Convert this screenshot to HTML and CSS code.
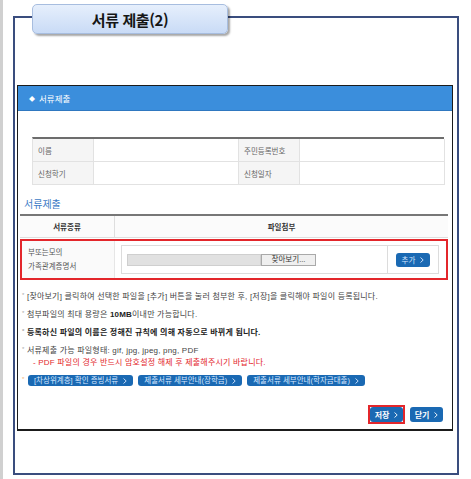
FILE: index.html
```html
<!DOCTYPE html>
<html lang="ko">
<head>
<meta charset="utf-8">
<title>서류 제출(2)</title>
<link rel="stylesheet" href="styles.css">
</head>
<body>
<div class="page">
  <div class="frame">
    <div class="tab">서류 제출(2)</div>
    <div class="dialog">
      <div class="dlg-head"><span class="diamond">◆</span>서류제출</div>
      <div class="info">
        <div class="th">이름</div><div class="td"></div><div class="th">주민등록번호</div><div class="td"></div>
        <div class="th">신청학기</div><div class="td"></div><div class="th">신청일자</div><div class="td"></div>
      </div>
      <div class="subtitle">서류제출</div>
      <div class="docs">
        <div class="docs-head">
          <div class="dh dh1">서류종류</div>
          <div class="dh">파일첨부</div>
        </div>
        <div class="docs-row">
          <div class="doc-name">부또는모의<br>가족관계증명서</div>
          <div class="doc-file">
            <div class="file-box">
              <div class="file-input">
                <div class="file-path"></div>
                <div class="file-btn">찾아보기...</div>
              </div>
              <div class="file-add">
                <span class="btn btn-add">추가<svg class="chev" viewBox="0 0 4 6"><polyline points="0.5,0.5 3.2,3 0.5,5.5"/></svg></span>
              </div>
            </div>
          </div>
        </div>
      </div>
      <ul class="notes">
        <li>[찾아보기] 클릭하여 선택한 파일을 [추가] 버튼을 눌러 첨부한 후, [저장]을 클릭해야 파일이 등록됩니다.</li>
        <li>첨부파일의 최대 용량은 <b>10MB</b>이내만 가능합니다.</li>
        <li class="strong">등록하신 파일의 이름은 정해진 규칙에 의해 자동으로 바뀌게 됩니다.</li>
        <li>서류제출 가능 파일형태: gif, jpg, jpeg, png, PDF<br><span class="warn">- PDF 파일의 경우 반드시 암호설정 해제 후 제출해주시기 바랍니다.</span></li>
        <li class="links">
          <span class="btn btn-link">[차상위계층] 확인 증빙서류<svg class="chev" viewBox="0 0 4 6"><polyline points="0.5,0.5 3.2,3 0.5,5.5"/></svg></span>
          <span class="btn btn-link">제출서류 세부안내(장학금)<svg class="chev" viewBox="0 0 4 6"><polyline points="0.5,0.5 3.2,3 0.5,5.5"/></svg></span>
          <span class="btn btn-link">제출서류 세부안내(학자금대출)<svg class="chev" viewBox="0 0 4 6"><polyline points="0.5,0.5 3.2,3 0.5,5.5"/></svg></span>
        </li>
      </ul>
      <div class="actions">
        <span class="save-mark"><span class="btn btn-act">저장<svg class="chev" viewBox="0 0 4 6"><polyline points="0.5,0.5 3.2,3 0.5,5.5"/></svg></span></span>
        <span class="btn btn-act">닫기<svg class="chev" viewBox="0 0 4 6"><polyline points="0.5,0.5 3.2,3 0.5,5.5"/></svg></span>
      </div>
    </div>
  </div>
</div>
</body>
</html>
```

FILE: styles.css
```css
* { box-sizing: border-box; }
html, body { margin: 0; padding: 0; background: #fff; }
body {
  font-family: "Liberation Sans", "Noto Sans CJK KR", sans-serif;
  color: #444;
}
.page {
  width: 471px;
  height: 479px;
  border-left: 3px solid #d0d0d0;
  padding-top: 16px;
  padding-left: 10px;
}
.frame {
  position: relative;
  width: 446px;
  height: 459px;
  border: 2px solid #3a4d7e;
  padding: 0 0 0 2px;
}
.tab {
  position: absolute;
  left: 17px;
  top: -14px;
  width: 196px;
  height: 30px;
  border: 1px solid #a7bddf;
  border-radius: 5px;
  background: linear-gradient(#e6effc, #c9dbf6);
  box-shadow: 2px 2px 2px rgba(0,0,0,0.35);
  display: flex;
  align-items: center;
  justify-content: center;
  font-family: "Noto Sans CJK KR", sans-serif;
  font-weight: 700;
  font-size: 15px;
  color: #151515;
  letter-spacing: -0.4px;
}
.dialog {
  margin-top: 67px;
  width: 436px;
  height: 346px;
  border: 1px solid #1b1b1b;
  border-bottom-width: 2px;
  display: flex;
  flex-direction: column;
}
.dlg-head {
  height: 25px;
  background: #3b8edc;
  border-bottom: 1px solid #2f78c0;
  color: #fff;
  font-size: 8.5px;
  display: flex;
  align-items: center;
  padding-left: 11px;
}
.diamond { font-size: 6px; margin-right: 4px; }
.info {
  margin: 26px 0 0 14px;
  width: 412px;
  display: grid;
  grid-template-columns: 61px 145px 61px 145px;
  border-top: 2px solid #6d6d6d;
  border-left: 1px solid #e2e2e2;
}
.info .th, .info .td {
  height: 23px;
  border-right: 1px solid #e2e2e2;
  border-bottom: 1px solid #e2e2e2;
  display: flex;
  align-items: center;
  font-size: 7.5px;
  color: #666;
}
.info .th { background: #f5f5f5; padding-left: 5px; }
.subtitle {
  margin: 13px 0 0 6px;
  font-size: 10px;
  line-height: 14px;
  color: #3c7bc6;
}
.docs {
  margin: 2px 0 0 2px;
  width: 428px;
  border-top: 2px solid #777;
}
.docs-head {
  display: grid;
  grid-template-columns: 95px 333px;
  height: 22px;
  border-bottom: 1px solid #dedede;
  background: #fbfbfb;
}
.dh {
  display: flex;
  align-items: center;
  justify-content: center;
  font-size: 7.5px;
  font-weight: 700;
  color: #333;
}
.dh1 { border-right: 1px solid #dedede; }
.docs-row {
  display: grid;
  grid-template-columns: 93px 331px;
  height: 41px;
  border: 2px solid #e3262b;
  margin-top: 1px;
}
.doc-name {
  background: #fafafa;
  border-right: 1px solid #e6e6e6;
  font-size: 7.5px;
  line-height: 14px;
  color: #555;
  display: flex;
  align-items: center;
  padding-left: 6px;
}
.doc-file { padding: 4px 7px 4px 6px; }
.file-box {
  height: 100%;
  border: 1px solid #dcdcdc;
  display: flex;
}
.file-input {
  width: 266px;
  display: flex;
  align-items: center;
  padding-left: 5px;
  border-right: 1px solid #dcdcdc;
}
.file-path {
  width: 134px;
  height: 12px;
  background: #e1e1e1;
  border: 1px solid #cfcfcf;
}
.file-btn {
  width: 55px;
  height: 12px;
  background: #efefef;
  border: 1px solid #a9a9a9;
  font-size: 7.5px;
  line-height: 10px;
  text-align: center;
  color: #333;
}
.file-add {
  flex: 1;
  display: flex;
  align-items: center;
  padding-left: 8px;
}
.btn {
  display: inline-flex;
  align-items: center;
  justify-content: center;
  background: #1a69b3;
  color: #d6e7ff;
  border-radius: 3px;
  font-size: 7.5px;
  white-space: nowrap;
  letter-spacing: 0;
}
.chev {
  width: 4px;
  height: 6px;
  margin-left: 5px;
  fill: none;
  stroke: currentColor;
  stroke-width: 0.9;
}
.btn-add { width: 34px; height: 14px; }
.notes {
  list-style: none;
  margin: 11px 0 0 4px;
  padding: 0;
}
.notes li {
  position: relative;
  padding-left: 5px;
  font-size: 8px;
  line-height: 12px;
  color: #444;
  margin-bottom: 6px;
  white-space: nowrap;
  letter-spacing: 0.2px;
}
.notes li::before {
  content: "*";
  position: absolute;
  left: 0;
  top: -2px;
  font-size: 6px;
  color: #aaa;
}
.notes li.strong { color: #222; font-weight: 700; }
.notes b { font-weight: 700; color: #222; }
.warn { color: #e3262b; padding-left: 6px; }
.notes li.links { display: flex; gap: 5px; padding-left: 6px; }
.notes li.links::before { color: #f0b070; }
.btn-link { height: 11px; padding: 0 6px; font-size: 7.5px; }
.actions {
  margin-top: auto;
  display: flex;
  justify-content: flex-end;
  align-items: center;
  gap: 5px;
  padding: 0 9px 5px 0;
}
.save-mark {
  border: 2px solid #e3262b;
  display: inline-flex;
}
.btn-act {
  width: 33px;
  height: 15px;
  font-size: 8px;
  color: #fff;
  font-weight: 700;
}
```
